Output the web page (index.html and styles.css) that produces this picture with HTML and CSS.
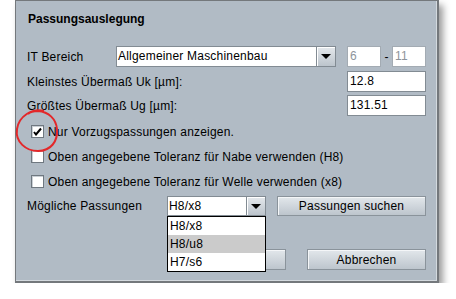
FILE: index.html
```html
<!DOCTYPE html>
<html lang="de">
<head>
    <meta charset="UTF-8">
    <meta name="viewport" content="width=device-width, initial-scale=1.0">
    <title>Passungsauslegung</title>
    <link rel="stylesheet" href="styles.css">
</head>
<body>
    <div class="dialog">
        <h1 class="title">Passungsauslegung</h1>

        <div class="row">
            <span class="label label-it">IT Bereich</span>
            <div class="combo combo-it">
                <span class="combo-value">Allgemeiner Maschinenbau</span>
                <span class="combo-button"><span class="arrow"></span></span>
            </div>
            <span class="field field-small disabled">6</span>
            <span class="dash">-</span>
            <span class="field field-small disabled">11</span>
        </div>
        <div class="row row-gap">
            <span class="label label-long">Kleinstes Übermaß Uk [µm]:</span>
            <span class="field field-wide">12.8</span>
        </div>
        <div class="row row-gap-sm">
            <span class="label label-long">Größtes Übermaß Ug [µm]:</span>
            <span class="field field-wide">131.51</span>
        </div>

        <div class="checks">
            <label class="check">
                <span class="box">
                    <svg width="9" height="9" viewBox="0 0 9 9"><path d="M1 5 L3 7.5 L8 1.5" fill="none" stroke="#000" stroke-width="2"/></svg>
                </span>
                Nur Vorzugspassungen anzeigen.
            </label>
            <label class="check">
                <span class="box"></span>
                Oben angegebene Toleranz für Nabe verwenden (H8)
            </label>
            <label class="check">
                <span class="box"></span>
                Oben angegebene Toleranz für Welle verwenden (x8)
            </label>
        </div>

        <div class="row row-fits">
            <span class="label label-fits">Mögliche Passungen</span>
            <div class="combo combo-fits">
                <span class="combo-value">H8/x8</span>
                <span class="combo-button"><span class="arrow"></span></span>
                <ul class="popup">
                    <li>H8/x8</li>
                    <li class="selected">H8/u8</li>
                    <li>H7/s6</li>
                </ul>
            </div>
            <button class="btn btn-search">Passungen suchen</button>
        </div>

        <div class="row actions">
            <button class="btn btn-action"></button>
            <button class="btn btn-action">Abbrechen</button>
        </div>
    </div>

    <!-- red marker drawn over the first checkbox -->
    <svg class="marker" width="50" height="50" viewBox="0 0 50 50">
        <path d="M31 5 C19 2 6 10 4 23 C2 36 13 45 25 45 C38 45 45 35 44 23 C43 13 36 6 25 5 C21 5 17 6 15 8" fill="none" stroke="#e3282a" stroke-width="2"/>
    </svg>
</body>
</html>
```

FILE: styles.css
```css
body {
    margin: 0;
    background-color: #fff;
    font-family: "Liberation Sans", Arial, sans-serif;
    font-size: 12px;
    letter-spacing: 0.2px;
    color: #000;
}
.dialog {
    position: relative;
    box-sizing: border-box;
    width: 424px;
    height: 283px;
    margin-left: 15px;
    padding: 11px 0 0 11px;
    background-color: #b1bbc5;
    border: 2px solid #74787c;
    border-left-width: 1px;
    border-top-width: 1px;
    box-shadow: inset -1px -1px 0 #d3d9de, 4px 5px 7px rgba(0, 0, 0, 0.4);
}
.title {
    margin: 0 0 0 1px;
    font-size: 12px;
    font-weight: bold;
    letter-spacing: 0;
    line-height: 15px;
    height: 15px;
}
.row {
    display: flex;
    align-items: center;
    height: 21px;
}
.row:first-of-type {
    margin-top: 19px;
}
.row-gap {
    margin-top: 4px;
}
.row-gap-sm {
    margin-top: 3px;
}
.label {
    flex: none;
}
.label-it {
    width: 89px;
}
.label-long {
    width: 320px;
}
.label-fits {
    width: 140px;
}
.field {
    box-sizing: border-box;
    height: 21px;
    line-height: 19px;
    padding: 0 2px;
    background-color: #fff;
    border: 1px solid #828b93;
}
.field-small {
    width: 34px;
}
.field-wide {
    width: 79px;
}
.disabled {
    color: #8d949b;
    border-color: #a3abb3;
}
.dash {
    width: 11px;
    text-align: center;
}
.combo {
    position: relative;
    display: flex;
    box-sizing: border-box;
    height: 21px;
    background-color: #fff;
    border: 1px solid #828b93;
}
.combo-it {
    width: 220px;
    margin-right: 11px;
}
.combo-fits {
    width: 99px;
    height: 20px;
    margin-right: 11px;
}
.combo-value {
    flex: 1;
    padding-left: 1px;
    line-height: 19px;
}
.combo-fits .combo-value {
    line-height: 18px;
}
.combo-button {
    display: flex;
    align-items: center;
    justify-content: center;
    width: 18px;
    border-left: 1px solid #828b93;
    background: linear-gradient(#e4e8ec, #bcc4cc);
    box-shadow: inset 1px 1px 0 #fff;
}
.arrow {
    width: 0;
    height: 0;
    border-left: 5px solid transparent;
    border-right: 5px solid transparent;
    border-top: 5px solid #000;
}
.checks {
    margin-top: 3px;
}
.check {
    display: flex;
    align-items: center;
    height: 25px;
}
.box {
    box-sizing: border-box;
    display: flex;
    align-items: center;
    justify-content: center;
    width: 13px;
    height: 13px;
    margin: 0 4px 0 4px;
    background-color: #fff;
    border: 1px solid #6f7880;
    box-shadow: inset 1px 1px 0 #c9cfd5;
}
.row-fits {
    margin-top: 2px;
    height: 20px;
}
.popup {
    position: absolute;
    left: -1px;
    top: 19px;
    width: 97px;
    margin: 0;
    padding: 0;
    list-style: none;
    background-color: #fff;
    border: 1px solid #000;
    z-index: 2;
}
.popup li {
    height: 18px;
    line-height: 18px;
    padding-left: 2px;
}
.popup .selected {
    background-color: #cbcbcb;
}
.btn {
    box-sizing: border-box;
    height: 20px;
    padding: 0;
    font-family: "Liberation Sans", Arial, sans-serif;
    font-size: 12px;
    letter-spacing: 0.2px;
    color: #000;
    border: 1px solid #8a939b;
    background: linear-gradient(#e2e7eb, #bdc5cd);
    box-shadow: inset 1px 1px 0 #f4f6f8;
}
.btn-search {
    width: 149px;
}
.actions {
    margin-top: 33px;
    padding-left: 140px;
    gap: 21px;
}
.btn-action {
    width: 119px;
    height: 21px;
}
.marker {
    position: absolute;
    left: 13px;
    top: 106px;
}
```
